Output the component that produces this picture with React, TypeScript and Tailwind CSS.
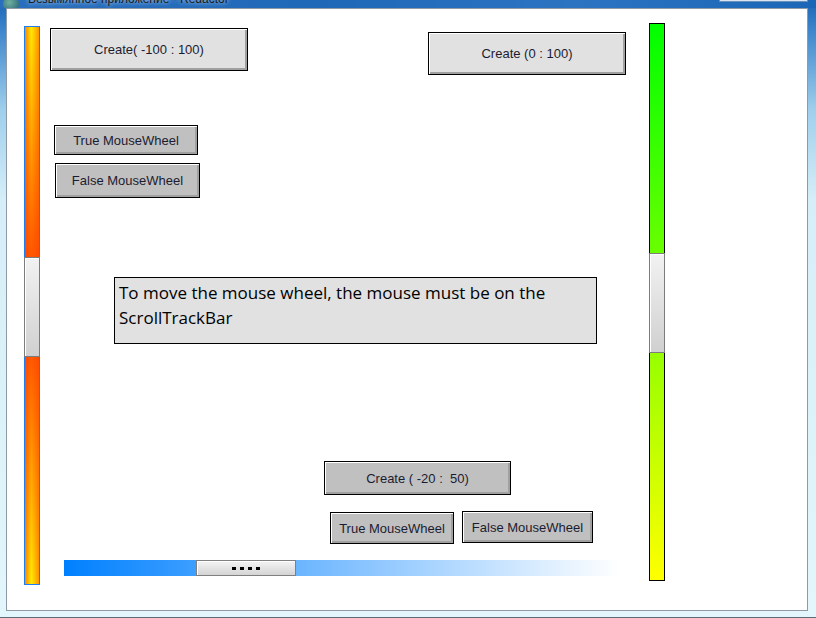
import React from "react";

const btn =
  "flex shrink-0 items-center justify-center whitespace-pre border border-black text-[13px] leading-none text-[#1c1c30] font-['Liberation_Sans',Arial,sans-serif] shadow-[inset_1px_1px_0_#ffffff,inset_-2px_-2px_0_#a0a0a0]";

const thumbV =
  "-mx-px shrink-0 border border-[#7c7c7c] bg-[linear-gradient(to_bottom,#f2f2f2,#d0d0d0)] shadow-[inset_1px_1px_0_#ffffff]";

export default function App() {
  return (
    <div className="flex h-[618px] w-[816px] flex-col overflow-hidden bg-[linear-gradient(to_bottom,#1a64b6_0px,#3d86cc_30px,#9fcfec_110px,#d6eef8_200px,#e2f6fb_618px)] font-['Liberation_Sans',Arial,sans-serif]">
      {/* title bar strip */}
      <div className="flex h-[8px] shrink-0 items-end overflow-hidden bg-[linear-gradient(to_right,#2a6fbd,#1f68b8_40%,#2a74c2_70%,#1b66b6)]">
        <div className="mb-[-4px] ml-[3px] h-[16px] w-[16px] shrink-0 rounded-full bg-[radial-gradient(circle_at_40%_40%,#6fb0a0,#1f5a70)]" />
        <div className="mb-[2px] ml-[9px] whitespace-nowrap text-[12px] leading-[14px] text-[#1a1a1a] [text-shadow:0_0_4px_#cfe6f8]">
          Безымянное приложение - Redactor
        </div>
        <div className="mb-[6px] ml-auto mr-[8px] h-[3px] w-[89px] shrink-0 border border-[#6a8fb8] bg-[#d8e6f4]" />
      </div>

      <div className="flex h-[603px] shrink-0">
        <div className="w-[6px] shrink-0" />
        {/* client area */}
        <div className="h-[603px] w-[802px] shrink-0 border border-[#8e9aa6] bg-white">
          <div className="flex h-full">
            {/* left scroll track bar */}
            <div className="ml-[17px] mt-[17px] flex h-[559px] w-[16px] shrink-0 flex-col border border-[#1e7ef0] bg-[linear-gradient(to_right,rgba(255,60,0,0.6),rgba(255,60,0,0)_45%,rgba(255,60,0,0.5)),linear-gradient(to_bottom,#ffee00,#ff4a00_45%,#ff4a00_55%,#ffee00)]">
              <div className={`mt-[230px] h-[100px] ${thumbV}`} />
            </div>

            {/* middle column */}
            <div className="ml-[10px] flex w-[576px] shrink-0 flex-col">
              <div className="flex items-start">
                <div className={`mt-[19px] h-[43px] w-[198px] bg-[#e1e1e1] ${btn}`}>Create( -100 : 100)</div>
                <div className={`ml-[180px] mt-[23px] h-[43px] w-[198px] bg-[#e1e1e1] ${btn}`}>Create (0 : 100)</div>
              </div>

              <div className={`ml-[4px] mt-[50px] h-[30px] w-[144px] bg-[#c0c0c0] ${btn}`}>True MouseWheel</div>
              <div className={`ml-[5px] mt-[8px] h-[35px] w-[145px] bg-[#c0c0c0] ${btn}`}>False MouseWheel</div>

              <div className="ml-[64px] mt-[79px] h-[67px] w-[483px] shrink-0 border border-black bg-[#e1e1e1] pl-[4px] pt-[2px] font-['Open_Sans','Noto_Sans',sans-serif] text-[17px] leading-[25px] text-black">
                To move the mouse wheel, the mouse must be on the
                <br />
                ScrollTrackBar
              </div>

              <div className={`ml-[274px] mt-[117px] h-[34px] w-[187px] bg-[#c0c0c0] ${btn}`}>Create ( -20 :  50)</div>

              <div className="ml-[280px] mt-[16px] flex items-start">
                <div className={`mt-[1px] h-[32px] w-[124px] bg-[#c0c0c0] ${btn}`}>True MouseWheel</div>
                <div className={`ml-[8px] h-[32px] w-[131px] bg-[#c0c0c0] ${btn}`}>False MouseWheel</div>
              </div>

              {/* horizontal scroll track bar */}
              <div className="ml-[14px] mt-[16px] flex h-[16px] w-[556px] shrink-0 bg-[linear-gradient(to_right,#0080ff,#ffffff)]">
                <div className="ml-[132px] flex h-[16px] w-[100px] shrink-0 items-center justify-center gap-[4px] border border-[#808080] bg-[linear-gradient(to_bottom,#f4f4f4,#d4d4d4)] shadow-[inset_1px_1px_0_#ffffff]">
                  <span className="h-[3px] w-[4px] bg-black" />
                  <span className="h-[3px] w-[4px] bg-black" />
                  <span className="h-[3px] w-[4px] bg-black" />
                  <span className="h-[3px] w-[4px] bg-black" />
                </div>
              </div>
            </div>

            {/* right scroll track bar */}
            <div className="ml-[23px] mt-[14px] flex h-[558px] w-[16px] shrink-0 flex-col border border-black bg-[linear-gradient(to_bottom,#00ff00,#ffff00)]">
              <div className={`mt-[229px] h-[100px] ${thumbV}`} />
            </div>
          </div>
        </div>
        <div className="w-[8px] shrink-0" />
      </div>

      <div className="h-[6px] shrink-0" />
      <div className="h-px shrink-0 bg-[#5c6a76]" />
    </div>
  );
}
